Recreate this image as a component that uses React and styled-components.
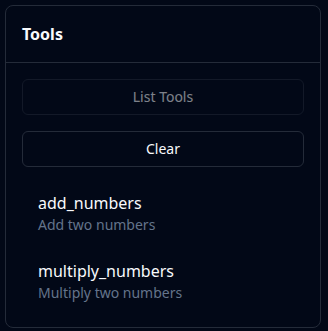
import styled, { createGlobalStyle } from "styled-components"

const GlobalStyle = createGlobalStyle`
  body {
    margin: 0;
    background: #020817;
    font-family: "Noto Sans", "Open Sans", sans-serif;
    color: #f8fafc;
  }
`

const Page = styled.div`
  padding: 5px 7px 3px 5px;
`

const Card = styled.div`
  width: 316px;
  box-sizing: border-box;
  border: 1px solid #242b39;
  border-radius: 8px;
  background: #020817;
`

const Header = styled.div`
  padding: 16px;
  border-bottom: 1px solid #242b39;
`

const Title = styled.h2`
  margin: 0;
  font-size: 16px;
  line-height: 24px;
  font-weight: 700;
  color: #f8fafc;
`

const Body = styled.div`
  padding: 16px;
  display: flex;
  flex-direction: column;
  gap: 16px;
`

const Button = styled.button`
  height: 36px;
  width: 100%;
  border: 1px solid #242b39;
  border-radius: 6px;
  background: transparent;
  color: #f8fafc;
  font-family: inherit;
  font-size: 14px;
  line-height: 20px;
  cursor: pointer;
  &:disabled {
    opacity: 0.5;
    cursor: default;
  }
`

const ToolList = styled.div`
  display: flex;
  flex-direction: column;
  gap: 8px;
`

const ToolItem = styled.div`
  padding: 8px 16px;
  border-radius: 6px;
`

const ToolName = styled.div`
  font-size: 16px;
  line-height: 24px;
  color: #f8fafc;
`

const ToolDesc = styled.div`
  font-size: 14px;
  line-height: 20px;
  color: #64748b;
`

const tools = [
  { name: "add_numbers", description: "Add two numbers" },
  { name: "multiply_numbers", description: "Multiply two numbers" },
]

export default function App() {
  return (
    <>
      <GlobalStyle />
      <Page>
        <Card>
          <Header>
            <Title>Tools</Title>
          </Header>
          <Body>
            <Button disabled>List Tools</Button>
            <Button>Clear</Button>
            <ToolList>
              {tools.map((t) => (
                <ToolItem key={t.name}>
                  <ToolName>{t.name}</ToolName>
                  <ToolDesc>{t.description}</ToolDesc>
                </ToolItem>
              ))}
            </ToolList>
          </Body>
        </Card>
      </Page>
    </>
  )
}
